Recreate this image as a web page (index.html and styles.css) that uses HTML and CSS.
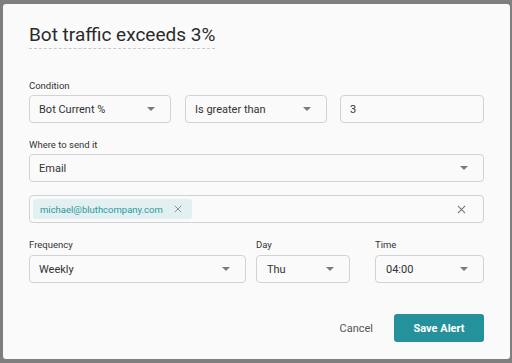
FILE: index.html
```html
<!DOCTYPE html>
<html lang="en">
<head>
    <meta charset="UTF-8">
    <title>Bot traffic alert</title>
    <link rel="stylesheet" href="styles.css">
</head>
<body>
    <div class="modal">
        <div class="modal-header">
            <h2 class="modal-title">Bot traffic exceeds 3%</h2>
        </div>

        <div class="field">
            <div class="label">Condition</div>
            <div class="row row-condition">
                <div class="select"><span>Bot Current %</span><i class="caret"></i></div>
                <div class="select"><span>Is greater than</span><i class="caret"></i></div>
                <div class="input">3</div>
            </div>
        </div>

        <div class="field">
            <div class="label">Where to send it</div>
            <div class="select"><span>Email</span><i class="caret"></i></div>
            <div class="tags">
                <span class="chip">michael@bluthcompany.com
                    <svg class="x" viewBox="0 0 10 10" width="8" height="8"><path d="M1 1L9 9M9 1L1 9" stroke="#8a8a8a" stroke-width="1.2" fill="none"/></svg>
                </span>
                <svg class="x clear" viewBox="0 0 10 10" width="9" height="9"><path d="M1 1L9 9M9 1L1 9" stroke="#777" stroke-width="1.2" fill="none"/></svg>
            </div>
        </div>

        <div class="row row-schedule">
            <div class="field col-freq">
                <div class="label">Frequency</div>
                <div class="select"><span>Weekly</span><i class="caret"></i></div>
            </div>
            <div class="field col-day">
                <div class="label">Day</div>
                <div class="select"><span>Thu</span><i class="caret"></i></div>
            </div>
            <div class="field col-time">
                <div class="label">Time</div>
                <div class="select"><span>04:00</span><i class="caret"></i></div>
            </div>
        </div>

        <div class="actions">
            <button class="btn-cancel">Cancel</button>
            <button class="btn-save">Save Alert</button>
        </div>
    </div>
</body>
</html>
```

FILE: styles.css
```css
body {
    margin: 0;
    padding: 4px 4px 4px 3px;
    background-color: #7f7f7f;
    font-family: Roboto, "Liberation Sans", sans-serif;
    color: #333;
}
.modal {
    width: 455px;
    height: 336px;
    background-color: #fafafa;
    border-radius: 3px;
    padding: 19px 26px 0 26px;
}
.modal-header {
    margin-bottom: 31px;
}
.modal-title {
    display: inline-block;
    margin: 0;
    font-size: 19px;
    font-weight: 400;
    line-height: 24px;
    color: #2a2a2a;
    padding-bottom: 1px;
    border-bottom: 1px dashed #c8c8c8;
}
.label {
    font-size: 9.5px;
    line-height: 12px;
    color: #333;
    margin-bottom: 3px;
}
.field {
    margin-bottom: 16px;
}
.row {
    display: flex;
}
.row-condition .select,
.row-condition .input {
    width: 142px;
}
.row-condition .select + .select {
    margin-left: 14px;
}
.row-condition .input {
    margin-left: 13px;
    flex: 1;
}
.select, .input, .tags {
    box-sizing: border-box;
    height: 28px;
    border: 1px solid #d2d2d2;
    border-radius: 4px;
    background-color: #fafafa;
    display: flex;
    align-items: center;
    padding: 0 15px 0 9px;
    font-size: 11px;
    color: #333;
}
.select span {
    flex: 1;
}
.caret {
    width: 0;
    height: 0;
    border-left: 4px solid transparent;
    border-right: 4px solid transparent;
    border-top: 4px solid #7a7a7a;
}
.tags {
    margin-top: 13px;
    padding: 0 17px 0 3px;
    justify-content: space-between;
}
.chip {
    display: flex;
    align-items: center;
    height: 20px;
    padding: 0 10px 0 7px;
    border-radius: 3px;
    background-color: #e2f0f1;
    color: #2a98a2;
    font-size: 9.5px;
}
.chip .x {
    margin-left: 11px;
}
.row-schedule {
    margin-top: 0;
}
.col-freq .label, .col-day .label, .col-time .label {
    margin-bottom: 4px;
}
.col-freq {
    width: 217px;
}
.col-day {
    width: 94px;
    margin-left: 10px;
}
.col-time {
    width: 109px;
    margin-left: auto;
}
.col-day .select, .col-time .select {
    padding-left: 10px;
}
.actions {
    display: flex;
    justify-content: flex-end;
    align-items: center;
    margin-top: 15px;
}
.actions button {
    font-family: Roboto, "Liberation Sans", sans-serif;
    font-size: 11px;
    border: none;
    cursor: pointer;
}
.btn-cancel {
    background: none;
    color: #555;
    margin-right: 15px;
}
.btn-save {
    width: 90px;
    height: 28px;
    border-radius: 3px;
    background-color: #25929b;
    color: #fff;
    font-weight: 700;
}
```
